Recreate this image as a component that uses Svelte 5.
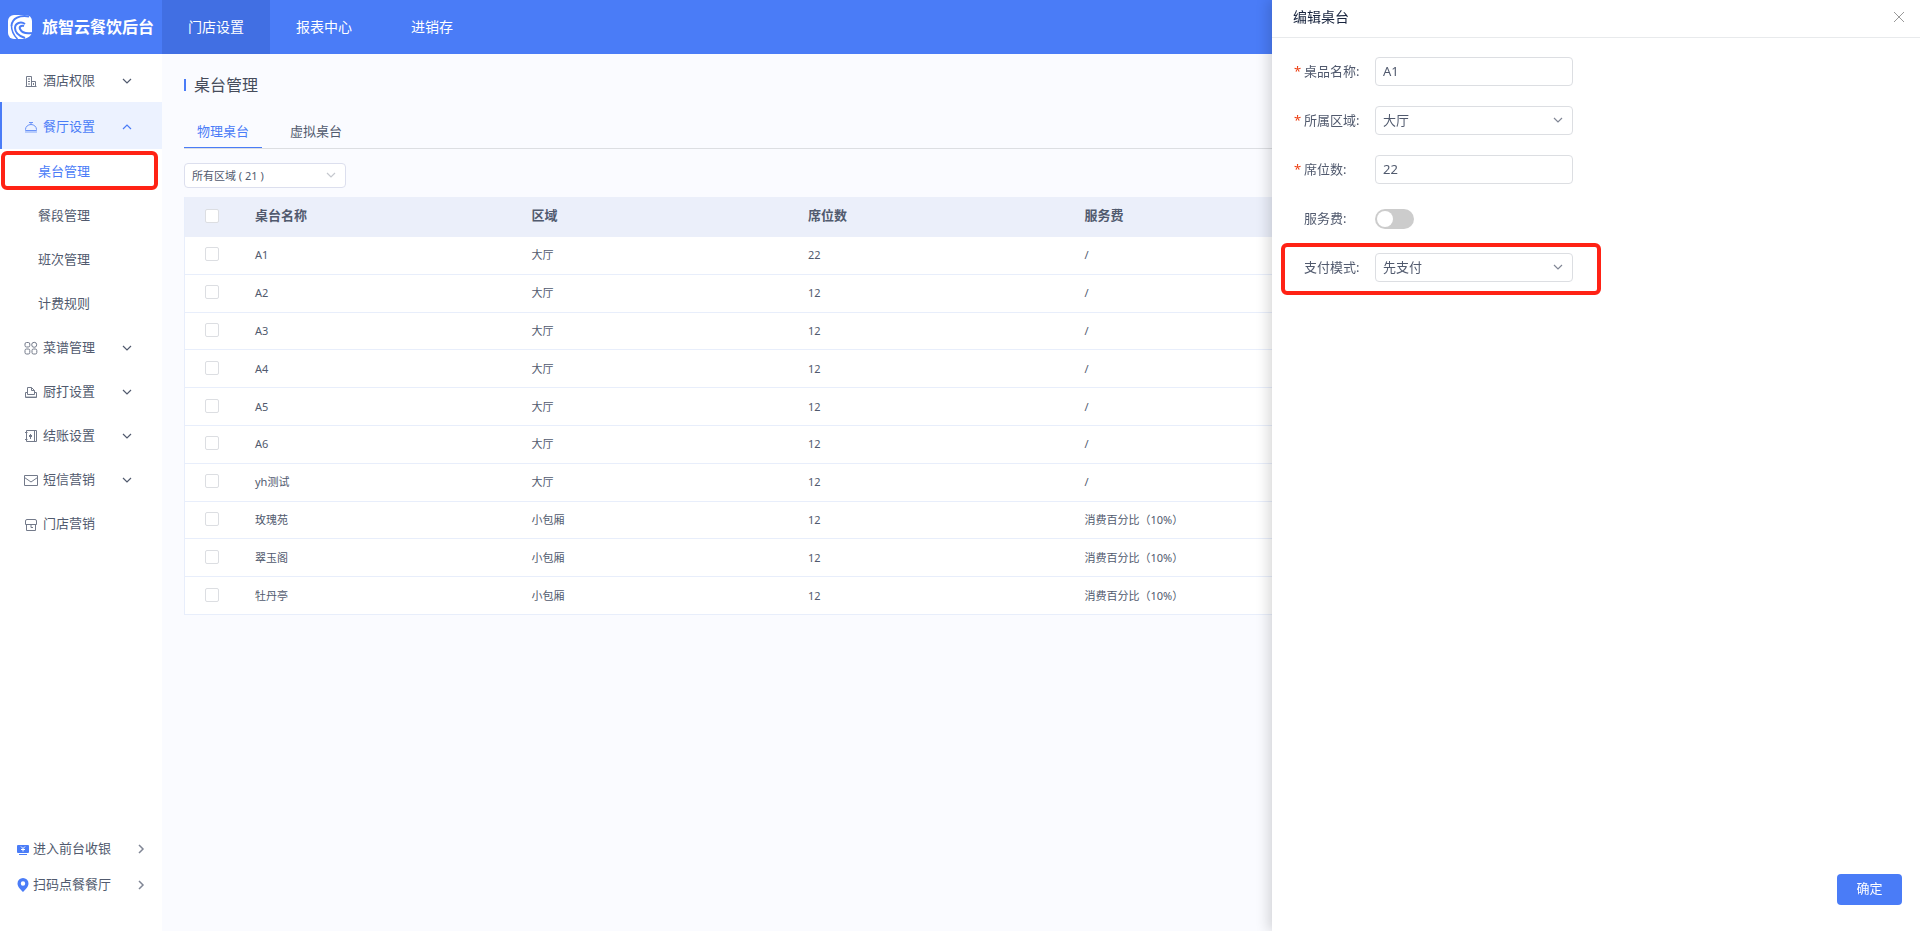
<script lang="ts">
  type MenuItem = {
    label: string;
    icon: string;
    open?: boolean;
    leaf?: boolean;
    children?: string[];
  };

  type TableRow = {
    name: string;
    area: string;
    seats: number;
    fee: string;
  };

  const topNav = ['门店设置', '报表中心', '进销存'];
  let activeNav = $state('门店设置');

  let menu = $state<MenuItem[]>([
    { label: '酒店权限', icon: 'building' },
    {
      label: '餐厅设置',
      icon: 'dish',
      open: true,
      children: ['桌台管理', '餐段管理', '班次管理', '计费规则']
    },
    { label: '菜谱管理', icon: 'grid' },
    { label: '厨打设置', icon: 'printer' },
    { label: '结账设置', icon: 'book' },
    { label: '短信营销', icon: 'mail' },
    { label: '门店营销', icon: 'shop', leaf: true }
  ]);
  let activePage = $state('桌台管理');

  const tabs = ['物理桌台', '虚拟桌台'];
  let activeTab = $state('物理桌台');

  // the last two columns have no title
  const columns = ['桌台名称', '区域', '席位数', '服务费', '', ''];

  const rows: TableRow[] = [
    { name: 'A1', area: '大厅', seats: 22, fee: '/' },
    { name: 'A2', area: '大厅', seats: 12, fee: '/' },
    { name: 'A3', area: '大厅', seats: 12, fee: '/' },
    { name: 'A4', area: '大厅', seats: 12, fee: '/' },
    { name: 'A5', area: '大厅', seats: 12, fee: '/' },
    { name: 'A6', area: '大厅', seats: 12, fee: '/' },
    { name: 'yh测试', area: '大厅', seats: 12, fee: '/' },
    { name: '玫瑰苑', area: '小包厢', seats: 12, fee: '消费百分比（10%）' },
    { name: '翠玉阁', area: '小包厢', seats: 12, fee: '消费百分比（10%）' },
    { name: '牡丹亭', area: '小包厢', seats: 12, fee: '消费百分比（10%）' }
  ];
  let selected = $state<string[]>([]);

  let drawerOpen = $state(true);
  let form = $state({ name: 'A1', area: '大厅', seats: '22', fee: false, payMode: '先支付' });

  function toggleAll() {
    selected = selected.length === rows.length ? [] : rows.map((row) => row.name);
  }
</script>

{#snippet chevron()}
  <svg class="chevron" viewBox="0 0 10 10" aria-hidden="true"><path d="M1 3l4 4 4-4" /></svg>
{/snippet}

{#snippet menuIcon(name: string)}
  <svg class="menu-icon" viewBox="0 0 14 14" aria-hidden="true">
    {#if name === 'building'}
      <path d="M1.500 12.500h11M2.500 12.500v-10h5v10M7.500 7.500h4v5M4.500 4.500v1M5.500 4.500v1M4.500 7v1M5.500 7v1M4.500 9.500v1M5.500 9.500v1M9.500 9v2" />
    {:else if name === 'dish'}
      <path d="M1.500 10.500V9.500a5.500 5 0 0 1 11 0v1zM5 2.500h4M7 2.500v2" />
      <path class="soft" d="M1 12h12" />
    {:else if name === 'grid'}
      <rect x="1" y="1.500" width="4.800" height="4.500" rx="1.500" />
      <circle cx="10.200" cy="3.800" r="2.500" />
      <rect x="1" y="8" width="4.800" height="5" rx="1.500" />
      <rect x="8" y="8" width="4.800" height="5" rx="1.500" />
    {:else if name === 'printer'}
      <path d="M3.500 9.500v-7h4l3 3v4M7.500 2.500v3h3M3.500 7.500h-2v5h11v-5h-2M3.500 9.500h7" />
      <path class="soft" d="M2 12h10.500" />
    {:else if name === 'book'}
      <path d="M2.500 1.500h10v11h-10zM10.500 1.500v11M1 3.500h2.500M1 10.500h2.500M6.500 5v5" />
      <path class="bold" d="M6.500 6v2" />
    {:else if name === 'mail'}
      <path d="M.5 2.500h13v10H.5zM.5 4.500L7 9l6.500-4.500" />
    {:else}
      <path d="M3 2.500h8a1.500 1.500 0 0 1 1.500 1.500v3.500h-11V4A1.500 1.500 0 0 1 3 2.500zM2.500 7.500v6h9v-6M7 7.500v3h2" />
    {/if}
  </svg>
{/snippet}

<div class="app">
  <header class="topbar">
    <div class="brand">
      <svg class="logo" viewBox="0 0 24 24" aria-hidden="true">
        <rect width="24" height="24" rx="6" fill="#fff" />
        <g fill="none" stroke="#4a7cf7">
          <path stroke-width="2" d="M21 1.500C12 0 4 3 3.500 11" />
          <path stroke-width="1.500" d="M3.500 11c0 5 2 9 6 13" />
          <path stroke-width="2" d="M17 9C13 6 7 8 7 13c0 5 4 8 10 10" />
          <path stroke-width="2" d="M16 11c-3-1-5 1-4 3 2 4 6 5 12 4" />
        </g>
        <path fill="#4a7cf7" d="M24 18v6h-8c4-1 7-3 8-6z" />
      </svg>
      <span>旅智云餐饮后台</span>
    </div>
    <nav class="top-nav">
      {#each topNav as item}
        <button type="button" class:active={item === activeNav} onclick={() => (activeNav = item)}>{item}</button>
      {/each}
    </nav>
  </header>

  <aside class="sidebar">
    <nav class="menu">
      {#each menu as item}
        <button class="menu-item" class:active={item.open} type="button" onclick={() => (item.open = !item.open)}>
          {@render menuIcon(item.icon)}
          <span>{item.label}</span>
          {#if !item.leaf}
            {@render chevron()}
          {/if}
        </button>
        {#if item.open && item.children}
          {#each item.children as child}
            <a
              class="sub-item"
              class:current={child === activePage}
              href="#{child}"
              onclick={() => (activePage = child)}>{child}</a>
          {/each}
        {/if}
      {/each}
    </nav>

    <div class="shortcuts">
      <a href="#cashier">
        <svg class="shortcut-icon" viewBox="0 0 12 14" aria-hidden="true">
          <path fill="#4a7cf7" d="M1 3h10a1 1 0 0 1 1 1v6a1 1 0 0 1-1 1H1a1 1 0 0 1-1-1V4a1 1 0 0 1 1-1zM2 12h8v1H2z" />
          <path fill="none" stroke="#fff" d="M4 4.500l2 2 2-2M4 7.500h4M6 6.500v3" />
        </svg>
        <span>进入前台收银</span>
        {@render chevron()}
      </a>
      <a href="#scan">
        <svg class="shortcut-icon" viewBox="0 0 12 14" aria-hidden="true">
          <path fill="#4a7cf7" fill-rule="evenodd" d="M6 0a5.500 5.500 0 0 1 5.500 5.500C11.500 9 8 12 6 14 4 12 .5 9 .5 5.500A5.500 5.500 0 0 1 6 0zm0 3.300a2.200 2.200 0 1 0 0 4.400 2.200 2.200 0 0 0 0-4.400z" />
        </svg>
        <span>扫码点餐餐厅</span>
        {@render chevron()}
      </a>
    </div>
  </aside>

  <main class="content">
    <h1>桌台管理</h1>

    <div class="tabs" role="tablist">
      {#each tabs as tab}
        <button
          type="button"
          role="tab"
          aria-selected={tab === activeTab}
          class:active={tab === activeTab}
          onclick={() => (activeTab = tab)}>{tab}</button>
      {/each}
    </div>

    <div class="select-wrap filter">
      <select aria-label="所有区域">
        <option>所有区域 ( 21 )</option>
      </select>
      {@render chevron()}
    </div>

    <table>
      <thead>
        <tr>
          <th class="check-col">
            <input type="checkbox" aria-label="全选" checked={selected.length === rows.length} onchange={toggleAll} />
          </th>
          {#each columns as column}
            <th>{column}</th>
          {/each}
        </tr>
      </thead>
      <tbody>
        {#each rows as row}
          <tr>
            <td class="check-col">
              <input type="checkbox" aria-label={row.name} value={row.name} bind:group={selected} />
            </td>
            <td>{row.name}</td>
            <td>{row.area}</td>
            <td>{row.seats}</td>
            <td>{row.fee}</td>
            <td></td>
            <td></td>
          </tr>
        {/each}
      </tbody>
    </table>
  </main>
</div>

{#if drawerOpen}
  <section class="drawer" aria-label="编辑桌台">
    <header class="drawer-header">
      <h2>编辑桌台</h2>
      <button class="close" type="button" aria-label="关闭" onclick={() => (drawerOpen = false)}>
        <svg viewBox="0 0 12 12" aria-hidden="true"><path d="M1 1l10 10M11 1L1 11" /></svg>
      </button>
    </header>

    <form class="drawer-form">
      <div class="field">
        <label class="required" for="name">桌品名称:</label>
        <input id="name" class="text-input" type="text" bind:value={form.name} />
      </div>
      <div class="field">
        <label class="required" for="area">所属区域:</label>
        <div class="select-wrap">
          <select id="area" bind:value={form.area}>
            <option>大厅</option>
            <option>小包厢</option>
          </select>
          {@render chevron()}
        </div>
      </div>
      <div class="field">
        <label class="required" for="seats">席位数:</label>
        <input id="seats" class="text-input" type="text" bind:value={form.seats} />
      </div>
      <div class="field">
        <label for="fee">服务费:</label>
        <input id="fee" class="switch" type="checkbox" role="switch" bind:checked={form.fee} />
      </div>
      <div class="field marked">
        <label for="pay-mode">支付模式:</label>
        <div class="select-wrap">
          <select id="pay-mode" bind:value={form.payMode}>
            <option>先支付</option>
            <option>后支付</option>
          </select>
          {@render chevron()}
        </div>
      </div>
    </form>

    <footer class="drawer-footer">
      <button class="confirm" type="button">确定</button>
    </footer>
  </section>
{/if}

<style>
  :global(body) {
    margin: 0;
    font-family: 'Noto Sans', 'Noto Sans CJK SC', sans-serif;
    font-size: 13px;
    line-height: 20px;
    color: #515a6e;
    background: #fafbff;
  }

  button,
  input,
  select {
    box-sizing: border-box;
    margin: 0;
    padding: 0;
    border: 0;
    background: none;
    font: inherit;
    color: inherit;
  }

  button,
  select {
    cursor: pointer;
  }

  a {
    color: inherit;
    text-decoration: none;
  }

  .app {
    display: grid;
    grid-template-columns: 162px 1fr;
    grid-template-rows: 54px 1fr;
    min-height: 100vh;
  }

  .chevron {
    width: 10px;
    height: 10px;
    fill: none;
    stroke: currentColor;
    flex: none;
  }

  .topbar {
    grid-column: 1 / -1;
    display: flex;
    background: #4a7cf7;
    color: #fff;
  }

  .brand {
    box-sizing: border-box;
    width: 162px;
    display: flex;
    align-items: center;
    gap: 10px;
    padding-left: 8px;
    font-size: 16px;
    font-weight: 700;
    white-space: nowrap;
  }

  .logo {
    width: 24px;
    height: 24px;
    flex: none;
  }

  .top-nav {
    display: flex;
  }

  .top-nav button {
    width: 108px;
    font-size: 14px;
  }

  .top-nav .active {
    background: #416fe3;
  }

  .sidebar {
    display: flex;
    flex-direction: column;
    background: #fff;
  }

  .menu {
    display: flex;
    flex-direction: column;
    padding-top: 4px;
  }

  .menu-item {
    display: flex;
    align-items: center;
    height: 44px;
    padding: 0 30px 0 24px;
    text-align: left;
  }

  .menu-item span {
    flex: 1;
    margin-left: 5px;
  }

  .menu-item.active {
    height: 47px;
    padding-left: 22px;
    border-left: 2px solid #4a7cf7;
    background: #ecf2ff;
    color: #4a7cf7;
  }

  .menu-item .chevron {
    margin-top: 2px;
    stroke-width: 1.2;
  }

  .menu-item.active .chevron {
    transform: rotate(180deg);
  }

  .menu-icon {
    width: 14px;
    height: 14px;
    margin-top: 2px;
    fill: none;
    stroke: currentColor;
    opacity: 0.8;
  }

  .menu-icon .soft {
    stroke-width: 2;
    opacity: 0.4;
  }

  .menu-icon .bold {
    stroke-width: 3;
  }

  .sub-item {
    position: relative;
    padding-left: 38px;
    line-height: 44px;
  }

  .sub-item.current {
    color: #4a7cf7;
  }

  .sub-item.current::after,
  .marked::after {
    content: '';
    position: absolute;
    border: 4px solid #ff2215;
    border-radius: 6px;
    pointer-events: none;
  }

  .sub-item.current::after {
    inset: 2px 4px 3px 1px;
  }

  .shortcuts {
    margin-top: auto;
    padding-bottom: 29px;
  }

  .shortcuts a {
    display: flex;
    align-items: center;
    height: 36px;
    padding: 0 16px 0 17px;
  }

  .shortcuts span {
    flex: 1;
    margin-left: 4px;
  }

  .shortcuts .chevron {
    margin-top: 2px;
    transform: rotate(-90deg);
    stroke-width: 1.5;
    color: #808695;
  }

  .shortcut-icon {
    width: 12px;
    height: 14px;
    margin-top: 2px;
  }

  .content {
    min-width: 0;
    padding: 20px 22px;
  }

  h1 {
    display: flex;
    align-items: center;
    gap: 8px;
    margin: 0 0 18px;
    font-size: 16px;
    font-weight: 400;
    line-height: 22px;
    color: #464c5b;
  }

  h1::before {
    content: '';
    width: 2px;
    height: 12px;
    background: #4a7cf7;
  }

  .tabs {
    display: flex;
    gap: 15px;
    margin-bottom: 14px;
    border-bottom: 1px solid #dcdee2;
  }

  .tabs button {
    height: 34px;
    padding: 0 13px;
    border-bottom: 1px solid transparent;
  }

  .tabs .active {
    border-color: #4a7cf7;
    color: #4a7cf7;
  }

  .select-wrap {
    position: relative;
    width: 198px;
  }

  .select-wrap select,
  .text-input {
    width: 100%;
    height: 29px;
    padding: 0 7px 2px;
    border: 1px solid #dcdee2;
    border-radius: 4px;
    background: #fff;
    appearance: none;
  }

  .select-wrap .chevron {
    position: absolute;
    right: 10px;
    top: 50%;
    margin-top: -6px;
    stroke-width: 1.2;
    color: #808695;
    pointer-events: none;
  }

  .filter {
    width: 162px;
    margin-bottom: 9px;
  }

  .filter select {
    display: block;
    height: 25px;
    padding-bottom: 0;
    border-color: #dcdfee;
    font-size: 11px;
  }

  .filter .chevron {
    color: #c5c8ce;
  }

  table {
    width: 100%;
    height: 418px;
    table-layout: fixed;
    border-spacing: 0;
    border-left: 1px solid #e8eefb;
    background: #fff;
  }

  th,
  td {
    padding: 0 16px;
    text-align: left;
  }

  th {
    height: 36px;
    padding-bottom: 4px;
    background: #ebeffa;
    font-size: 13px;
  }

  td {
    border-bottom: 1px solid #e8eefb;
    font-size: 11px;
  }

  .check-col {
    width: 14px;
    padding: 0 20px 2px;
  }

  .check-col input {
    display: block;
    width: 14px;
    height: 14px;
    border: 1px solid #dcdee2;
    border-radius: 2px;
    background: #fff;
    appearance: none;
  }

  .check-col input:checked {
    border-color: #4a7cf7;
    background: #4a7cf7;
  }

  .drawer {
    position: fixed;
    top: 0;
    right: 0;
    bottom: 0;
    display: flex;
    flex-direction: column;
    width: 648px;
    max-width: 100%;
    background: #fff;
    box-shadow: -4px 0 12px rgba(0, 0, 0, 0.15);
  }

  .drawer-header {
    display: flex;
    align-items: center;
    justify-content: space-between;
    padding: 7px 15px 10px 21px;
    border-bottom: 1px solid #e8eaec;
  }

  h2 {
    margin: 0;
    font-size: 14px;
    font-weight: 400;
    color: #17233d;
  }

  .close {
    display: flex;
  }

  .close svg {
    width: 12px;
    height: 12px;
    fill: none;
    stroke: #999;
  }

  .drawer-form {
    display: grid;
    gap: 20px;
    padding: 19px 22px;
  }

  .field {
    position: relative;
    display: flex;
    align-items: center;
    height: 29px;
  }

  .field label {
    box-sizing: border-box;
    width: 81px;
    padding: 0 0 2px 10px;
    flex: none;
  }

  .field .required {
    padding-left: 0;
  }

  .required::before {
    content: '*';
    display: inline-block;
    width: 10px;
    color: #ed4014;
  }

  .text-input {
    width: 198px;
  }

  .switch {
    width: 39px;
    height: 20px;
    padding: 2px;
    border-radius: 10px;
    background: #ccc;
    appearance: none;
    cursor: pointer;
  }

  .switch::before {
    content: '';
    display: block;
    width: 16px;
    height: 16px;
    border-radius: 50%;
    background: #fff;
  }

  .switch:checked {
    padding-left: 21px;
    background: #4a7cf7;
  }

  .marked::after {
    top: -10px;
    bottom: -13px;
    left: -13px;
    width: 312px;
  }

  .drawer-footer {
    display: flex;
    justify-content: flex-end;
    margin-top: auto;
    padding: 0 18px 26px;
  }

  .confirm {
    width: 65px;
    height: 31px;
    padding-bottom: 3px;
    border-radius: 4px;
    background: #4a7cf7;
    color: #fff;
  }
</style>
